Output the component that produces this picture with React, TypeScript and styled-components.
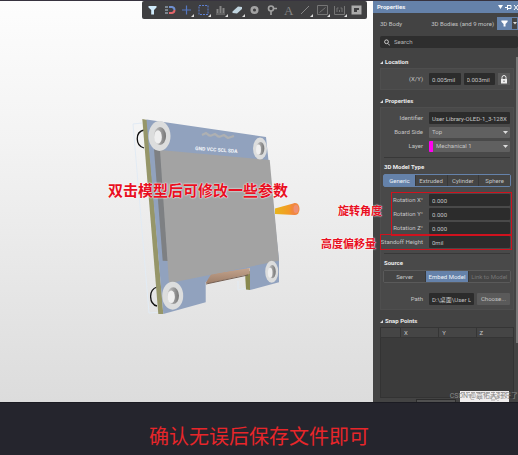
import React from "react";
import styled, { createGlobalStyle, css } from "styled-components";

const Global = createGlobalStyle`
  * { box-sizing: border-box; }
  html, body { margin: 0; }
  body { background: #25252d; font-family: Roboto, "Noto Sans CJK SC", sans-serif; font-size: 6px; line-height: 8px; color: #c4c4c4; }
  button, input, select { font: inherit; color: inherit; margin: 0; }
`;

const Page = styled.div`
  height: 100vh;
  display: flex;
  flex-direction: column;
  overflow: hidden;
`;

const Workspace = styled.main`
  flex: 1;
  min-height: 0;
  display: flex;
  border-top: 1px solid #37333f;
`;

const Stage = styled.section`
  position: relative;
  flex: 1;
  min-width: 0;
  background: linear-gradient(#fdfdfd, #f3f3f3 35%, #dcdcdc);
  display: flex;
  flex-direction: column;
`;

const Toolbar = styled.div`
  align-self: flex-end;
  display: flex;
  align-items: center;
  height: 18px;
  margin-right: 6px;
  padding: 0 2px;
  background: #3f3f41;
  border-radius: 2px;
`;

const Tool = styled.button`
  flex: none;
  width: 17px;
  height: 16px;
  padding: 0;
  border: 0;
  background: none;
  display: flex;
  align-items: center;
  justify-content: center;
`;

const BoardView = styled.div`
  flex: 1;
  min-height: 0;
  padding: 91px 0 0 130px;
`;

const Note = styled.p<{ $x: number; $y: number; $size: number }>`
  position: absolute;
  z-index: 2;
  right: ${(p) => p.$x}px;
  top: ${(p) => p.$y}px;
  margin: 0;
  white-space: nowrap;
  font-family: "Noto Sans CJK SC", sans-serif;
  font-weight: 700;
  font-size: ${(p) => p.$size}px;
  line-height: 20px;
  color: #e80f22;
  text-shadow: 0 0 1px #fff, 0 0 2px #fff;
`;

const Panel = styled.aside`
  position: relative;
  flex: none;
  width: 145px;
  background: #434343;
  overflow: hidden;
`;

const PanelHeader = styled.header`
  display: flex;
  align-items: center;
  gap: 3px;
  height: 12px;
  padding: 0 0 0 4px;
  background: #6582aa;
  color: #f4f6fa;
  font-weight: 700;
`;

const PanelTitle = styled.h1`
  flex: 1;
  margin: 0;
  font-size: 6px;
`;

const PanelBody = styled.div`
  display: flex;
  flex-direction: column;
  padding: 4px 4px 0 7px;
`;

const FilterRow = styled.div`
  display: flex;
  align-items: center;
  height: 13px;
  margin-right: -4px;
`;

const Scope = styled.span`
  flex: 1;
  text-align: right;
  padding-right: 3px;
`;

const FilterButton = styled.button<{ $on?: boolean }>`
  display: flex;
  align-items: center;
  justify-content: center;
  width: ${(p) => (p.$on ? 14 : 7)}px;
  height: 13px;
  padding: 0;
  border: 1px solid #6582aa;
  background: ${(p) => (p.$on ? "#6582aa" : "#464646")};
`;

const SearchBox = styled.label`
  display: flex;
  align-items: center;
  gap: 4px;
  height: 12px;
  margin: 6px -4px 3px 0;
  padding-left: 4px;
  border-radius: 2px;
  background: #2e2e2e;
`;

const SearchInput = styled.input`
  flex: 1;
  min-width: 0;
  padding: 0;
  border: 0;
  background: none;
  &::placeholder { color: #b4b4b4; opacity: 1; }
`;

const SectionTitle = styled.h2`
  display: flex;
  align-items: center;
  gap: 2px;
  margin: 7px 0 2px;
  font-size: 6px;
  line-height: 8px;
  color: #ececec;
`;

const Card = styled.div`
  display: flex;
  flex-direction: column;
  gap: 2px;
  padding: 4px 3px;
  background: #494949;
  border: 1px solid #4e4e4e;
`;

const Row = styled.div`
  display: grid;
  grid-template-columns: 39px minmax(0, 1fr);
  column-gap: 6px;
  align-items: center;
  height: 12px;
`;

const Label = styled.label`
  justify-self: end;
  white-space: nowrap;
`;

const Controls = styled.div`
  display: flex;
  gap: 3px;
  min-width: 0;
`;

const field = css`
  flex: 1;
  width: 100%;
  min-width: 0;
  height: 12px;
  padding: 0 3px;
  border: 0;
  border-radius: 1px;
`;

const Field = styled.input`
  ${field}
  background: #2c2c2c;
`;

const SelectWrap = styled.div`
  position: relative;
  display: flex;
  align-items: center;
  height: 11px;
  background: #606060;
  border-radius: 1px;
  overflow: hidden;
`;

const Select = styled.select`
  ${field}
  appearance: none;
  background: transparent;
`;

const Swatch = styled.span`
  flex: none;
  width: 4px;
  height: 11px;
  background: #ff00f0;
`;

const Caret = styled.svg`
  position: absolute;
  right: 2px;
  pointer-events: none;
`;

const LockButton = styled.button`
  flex: none;
  width: 12px;
  height: 12px;
  padding: 0;
  border: 0;
  background: #5a5a5a;
  display: flex;
  align-items: center;
  justify-content: center;
`;

const Divider = styled.hr`
  width: 100%;
  margin: 3px 0;
  border: 0;
  border-top: 1px solid #383838;
`;

const SubTitle = styled.h3`
  margin: 0 0 1px;
  font-size: 6px;
  line-height: 8px;
  color: #ececec;
`;

const Segments = styled.div<{ $accent?: boolean }>`
  display: flex;
  height: 13px;
  margin: 0 -1px ${(p) => (p.$accent ? 5 : 8)}px;
  border: 1px solid ${(p) => (p.$accent ? "#6582aa" : "#5a5a5a")};
  border-radius: 2px;
`;

const Segment = styled.button<{ $on?: boolean }>`
  flex: 1;
  padding: 0;
  border: 0;
  white-space: nowrap;
  background: ${(p) => (p.$on ? "#6582aa" : "#454545")};
  color: ${(p) => (p.$on ? "#eef2f8" : "#c4c4c4")};
  & + & { border-left: 1px solid #383838; }
  &:disabled { color: #777; }
`;

const Highlight = styled.div<{ $inset: number }>`
  position: relative;
  display: flex;
  flex-direction: column;
  gap: 2px;
  &::after {
    content: "";
    position: absolute;
    z-index: 1;
    inset: -2px -2px -2px ${(p) => p.$inset}px;
    border: 1px solid #d0121e;
    pointer-events: none;
  }
`;

const ChooseButton = styled.button`
  flex: none;
  width: 33px;
  height: 12px;
  padding: 0;
  border: 0;
  border-radius: 1px;
  background: #5a5a5a;
`;

const Table = styled.table`
  width: 100%;
  border-collapse: collapse;
  background: #3b3b3b;
  border: 1px solid #333;
  th {
    height: 10px;
    padding: 0 0 0 3px;
    text-align: left;
    font-weight: 400;
    background: #454545;
    border: 1px solid #353535;
  }
  th:first-child { width: 20px; }
  td { height: 60px; }
`;

const TableActions = styled.div`
  display: flex;
  justify-content: flex-end;
  padding: 1px 58px 0 36px;
`;

const AddButton = styled.button`
  flex: 1;
  height: 10px;
  border: 1px solid #2d2d2d;
  background: #505050;
`;

const ScrollThumb = styled.div`
  position: absolute;
  right: 0;
  top: 56px;
  width: 2px;
  height: 286px;
  background: #777;
`;

const Stamp = styled.svg`
  position: absolute;
  right: 9px;
  bottom: 0;
`;

const Watermark = styled.span`
  position: absolute;
  right: 0;
  bottom: 2px;
  white-space: nowrap;
  font-size: 7px;
  color: #8c8c8c;
`;

const Caption = styled.footer`
  flex: none;
  height: 53px;
  padding-top: 18px;
  border-top: 1px solid #1b1b22;
  background: #25252d;
  text-align: center;
  font-family: "Noto Sans CJK SC", sans-serif;
  font-size: 20px;
  line-height: 30px;
  color: #e8262a;
`;

const CaretIcon = () => (
  <Caret width="5" height="3" viewBox="0 0 5 3"><path d="M0 0h5L2.500 3z" fill="#ddd" /></Caret>
);

const Funnel = ({ size = 9, color = "#d4ecf8" }) => (
  <svg width={size} height={size} viewBox="0 0 9 9"><path d="M.5.8h8v1.400L5.800 5v3.400H3.300V5L.5 2.200z" fill={color} /></svg>
);

const corner = <path d="M16 12v3h-3z" fill="#ddd" />;
const tools: { name: string; art: React.ReactNode }[] = [
  { name: "Filter", art: <path d="M4.500 4h8v1.500L10 8v4.500H7.200V8L4.500 5.500z" fill="#cfeafa" /> },
  { name: "Snap", art: <g fill="none" strokeWidth="2"><path d="M8 5h3a3 3 0 0 1 2.500 3" stroke="#6f8fd0" /><path d="M13.500 8a3 3 0 0 1-2.500 3H8" stroke="#e0656a" /><path d="M4 5h3M4 8h3M4 11h3" stroke="#b9cde0" strokeWidth="1" /></g> },
  { name: "Move", art: <><path d="M8.500 3.500v9M4 8h9" stroke="#5577c0" strokeWidth="1.200" />{corner}</> },
  { name: "Select area", art: <><path d="M4 3.500h9v9H4z" fill="none" stroke="#5c7fd0" strokeDasharray="2 1" />{corner}</> },
  { name: "Align", art: <><path d="M4 12h9" stroke="#858585" /><path d="M5.500 7v4M8.500 4v7M11.500 6v5" stroke="#858585" strokeWidth="2" />{corner}</> },
  { name: "Component", art: <><path d="M3.500 9.500 9 4.500l4 .5v2L8 11.500l-4.500-.5z" fill="#c0d4df" />{corner}</> },
  { name: "Pad", art: <circle cx="8.500" cy="8" r="2.800" fill="none" stroke="#a2a2a2" strokeWidth="2.500" /> },
  { name: "Via", art: <><circle cx="8" cy="6.500" r="2.500" fill="none" stroke="#a2a2a2" strokeWidth="1.600" /><path d="M8 9v4M11 6.500h3" stroke="#a2a2a2" strokeWidth="1.600" /></> },
  { name: "Text", art: <text x="4" y="12.500" fontFamily="Liberation Serif" fontSize="13" fill="#858585">A</text> },
  { name: "Line", art: <><path d="m4 12 8-8" stroke="#858585" />{corner}</> },
  { name: "Dimension", art: <><path d="M3.500 3.500h10v9h-10zM5.500 10.500l6-5" fill="none" stroke="#757575" />{corner}</> },
  { name: "Room", art: <><path d="M3.500 4v8.500h10V4M6 10V6h1.500M11 10V6H9.500M8.500 10V8" fill="none" stroke="#757575" />{corner}</> },
  { name: "Region", art: <path fillRule="evenodd" d="M3.500 3.500h10v9h-10zM6 6v4h3V8h2V6z" fill="#aaa" /> },
];

const Hole = ({ x, y, rx, ry }: { x: number; y: number; rx: number; ry: number }) => (
  <g>
    <ellipse cx={x} cy={y} rx={rx} ry={ry} fill="#dcdddd" />
    <ellipse cx={x + 0.5} cy={y} rx={rx * 0.55} ry={ry * 0.6} fill="url(#bore)" />
    <ellipse cx={x - 1.5} cy={y + 1} rx={rx * 0.35} ry={ry * 0.45} fill="#efefef" />
  </g>
);

const OledModel = () => (
  <svg width="180" height="215" viewBox="130 110 180 215" role="img" aria-label="OLED module 3D model">
    <defs>
      <linearGradient id="bore"><stop offset="0" stopColor="#c8c8c8" /><stop offset="1" stopColor="#777" /></linearGradient>
      <linearGradient id="cone"><stop offset="0" stopColor="#e8b51c" /><stop offset=".7" stopColor="#f39a25" /><stop offset="1" stopColor="#f07a50" /></linearGradient>
      <linearGradient id="cable" x2="0" y2="1"><stop offset="0" stopColor="#c3a48d" /><stop offset="1" stopColor="#9f7f6a" /></linearGradient>
    </defs>
    <path d="m142 123-9 1 16 189 12-1M238 281v9l8-2" fill="none" stroke="#e2ebf4" />
    <path d="M144 130c-9 2-9 15 0 18M157 287c-9 3-8 17 0 19" fill="none" stroke="#111" strokeWidth="1.300" />
    <path d="m275 208.500 20-5.500v12l-20-1z" fill="url(#cone)" />
    <ellipse cx="295.500" cy="209" rx="4" ry="6" fill="#f1893f" />
    <ellipse cx="296" cy="209" rx="2.500" ry="4" fill="#ef8f72" />
    <path d="m142.300 119 5 1 16 194h-5z" fill="#969669" />
    <path d="m245 272 5-1v19l-4-.5z" fill="#898950" />
    <path d="m146.500 119.500 119.500 17.500 13 123v22.300L250 290v-22l-44.300 14v20.300L163.300 314z" fill="#91a2be" />
    <path d="m205.700 283 5.500-9 38.500-6v6l-39 9z" fill="url(#cable)" />
    <path d="m206 284 42-9" stroke="#755f52" />
    <path d="m154 149.300 7 1.200 7 110.500-5.300-.3z" fill="#7e8083" />
    <path d="m160 150 109.700 10 9.300 100.700-110 22.600z" fill="#a3a3a3" />
    <Hole x={159.500} y={136} rx={11} ry={15} />
    <Hole x={260} y={148.500} rx={7} ry={11} />
    <Hole x={172.700} y={295.700} rx={10.500} ry={14} />
    <Hole x={271.700} y={271.700} rx={6.500} ry={11} />
    <g fill="none" stroke="#aeb0b2" strokeWidth="2.200"><path d="m202 135 4-2 4 3M210 136l5-2 4 3M219 137l5-2 4 3M228 138l6-2" /></g>
    <text x="195" y="150" transform="rotate(4 195 150)" fontFamily="Liberation Sans Narrow, Roboto" fontSize="5" fontWeight="700" fill="#f4f6fa">GND VCC SCL SDA</text>
  </svg>
);

const rotations = ["X", "Y", "Z"];

export default function App() {
  return (
    <Page>
      <Global />
      <Workspace>
        <Stage>
          <Toolbar>
            {tools.map((t) => (
              <Tool key={t.name} aria-label={t.name}><svg width="17" height="16" viewBox="0 0 17 16">{t.art}</svg></Tool>
            ))}
          </Toolbar>
          <BoardView><OledModel /></BoardView>
          <Note $x={85} $y={179} $size={15}>双击模型后可修改一些参数</Note>
          <Note $x={-9} $y={199} $size={11}>旋转角度</Note>
          <Note $x={-3} $y={232} $size={11}>高度偏移量</Note>
        </Stage>
        <Panel>
          <PanelHeader>
            <PanelTitle>Properties</PanelTitle>
            <svg width="20" height="7" viewBox="0 0 20 7" fill="none" stroke="#fff"><path d="M0 1h5L2.500 5z" fill="#fff" stroke="none" /><path d="M7 3.500h2M9.500 1v5M10 1.500h3v3h-3M16 1l4 5M20 1l-4 5" /></svg>
          </PanelHeader>
          <PanelBody>
            <FilterRow>
              <span>3D Body</span>
              <Scope>3D Bodies (and 9 more)</Scope>
              <FilterButton $on aria-label="Filter"><Funnel size={7} color="#fff" /></FilterButton>
              <FilterButton aria-label="Filter options"><svg width="4" height="3" viewBox="0 0 4 3"><path d="M0 0h4L2 2.500z" fill="#ddd" /></svg></FilterButton>
            </FilterRow>
            <SearchBox>
              <svg width="6" height="7" viewBox="0 0 6 7" fill="none" stroke="#ccc"><circle cx="2.500" cy="2.800" r="1.900" /><path d="m4 4.500 1.800 2" /></svg>
              <SearchInput placeholder="Search" aria-label="Search" />
            </SearchBox>
            <Heading>Location</Heading>
            <Card>
              <Row>
                <Label htmlFor="x">(X/Y)</Label>
                <Controls>
                  <Field id="x" defaultValue="0.005mil" />
                  <Field aria-label="Y" defaultValue="0.003mil" />
                  <LockButton aria-label="Lock"><svg width="8" height="9" viewBox="0 0 8 9"><path d="M2 4V2.500a2 2 0 0 1 4 0V4" fill="none" stroke="#eee" /><path fillRule="evenodd" d="M1 4h6v4.500H1zM3.500 5.500v1.500h1V5.500z" fill="#eee" /></svg></LockButton>
                </Controls>
              </Row>
            </Card>
            <Heading>Properties</Heading>
            <Card>
              <Row>
                <Label htmlFor="ident">Identifier</Label>
                <Field id="ident" defaultValue="User Library-OLED-1_3-128X64" />
              </Row>
              <Row>
                <Label htmlFor="side">Board Side</Label>
                <SelectWrap><Select id="side"><option>Top</option></Select><CaretIcon /></SelectWrap>
              </Row>
              <Row>
                <Label htmlFor="layer">Layer</Label>
                <SelectWrap><Swatch /><Select id="layer"><option>Mechanical 1</option></Select><CaretIcon /></SelectWrap>
              </Row>
              <Divider />
              <SubTitle>3D Model Type</SubTitle>
              <Segments $accent>
                <Segment $on>Generic</Segment><Segment>Extruded</Segment><Segment>Cylinder</Segment><Segment>Sphere</Segment>
              </Segments>
              <Highlight $inset={7}>
                {rotations.map((axis) => (
                  <Row key={axis}>
                    <Label htmlFor={`rot${axis}`}>Rotation {axis}°</Label>
                    <Field id={`rot${axis}`} defaultValue="0.000" />
                  </Row>
                ))}
              </Highlight>
              <Highlight $inset={-4}>
                <Row>
                  <Label htmlFor="standoff">Standoff Height</Label>
                  <Field id="standoff" defaultValue="0mil" />
                </Row>
              </Highlight>
              <Divider />
              <SubTitle>Source</SubTitle>
              <Segments>
                <Segment>Server</Segment><Segment $on>Embed Model</Segment><Segment disabled>Link to Model</Segment>
              </Segments>
              <Row>
                <Label htmlFor="path">Path</Label>
                <Controls>
                  <Field id="path" defaultValue="D:\桌面\User Library" />
                  <ChooseButton>Choose...</ChooseButton>
                </Controls>
              </Row>
            </Card>
            <Heading>Snap Points</Heading>
            <Table>
              <thead><tr><th /><th>X</th><th>Y</th><th>Z</th></tr></thead>
              <tbody><tr><td colSpan={4} /></tr></tbody>
            </Table>
            <TableActions><AddButton aria-label="Add" /></TableActions>
          </PanelBody>
          <ScrollThumb />
          <Stamp width="49" height="11" viewBox="0 0 49 11">
            <path d="M0 0h49v11H0z" fill="#f0eeee" />
            <path d="M1 1.500h47M8 4h5M10 3v5M18 7l2 2M24 4h3M31 5h5v4h-5zM38 4v6M41 4h5M43 4v5" fill="none" stroke="#a9a6a6" strokeDasharray="4 1" />
          </Stamp>
          <Watermark>CSDN @嘉佑大好好了</Watermark>
        </Panel>
      </Workspace>
      <Caption>确认无误后保存文件即可</Caption>
    </Page>
  );
}

function Heading({ children }: { children: React.ReactNode }) {
  return (
    <SectionTitle>
      <svg width="3" height="3" viewBox="0 0 3 3"><path d="M3 0v3H0z" fill="#ddd" /></svg>
      {children}
    </SectionTitle>
  );
}
